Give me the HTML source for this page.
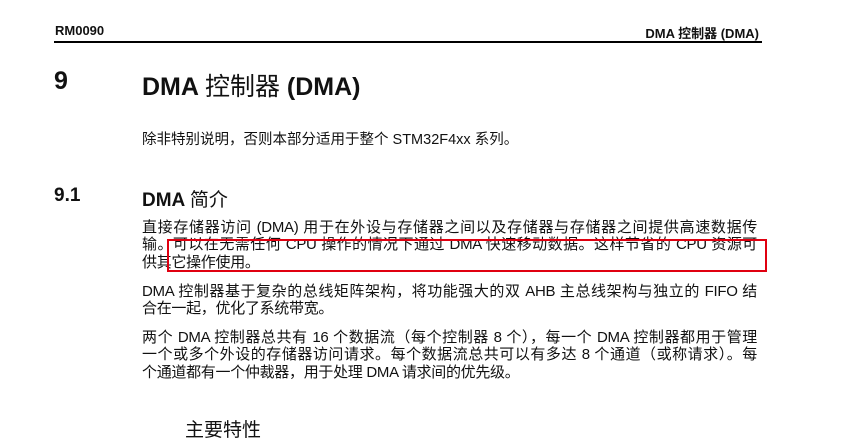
<!DOCTYPE html>
<html><head><meta charset="utf-8"><style>
body{margin:0;width:842px;height:424px;background:#fff;position:relative;overflow:hidden;font-family:"Liberation Sans","Noto Sans CJK SC",sans-serif;color:#111}
.a{position:absolute;white-space:nowrap}
.l{position:absolute;left:142px;width:615px;font-size:15px;line-height:17px;text-align:justify;text-align-last:justify;white-space:nowrap;letter-spacing:-0.3px}
.n{text-align-last:left}
</style></head><body>
<div class="a" style="left:55px;top:23px;font-size:13px;font-weight:bold">RM0090</div>
<div class="a" style="right:83px;top:23px;font-size:13px;font-weight:bold">DMA 控制器 (DMA)</div>
<div class="a" style="left:54px;top:41px;width:708px;height:1.5px;background:#000"></div>
<div class="a" style="left:54px;top:67px;font-size:25px;font-weight:bold">9</div>
<div class="a" style="left:142px;top:67px;font-size:25px;font-weight:bold">DMA <span style="font-weight:normal">控制器</span> (DMA)</div>
<div class="a" style="left:142px;top:128px;font-size:14.5px">除非特别说明，否则本部分适用于整个 STM32F4xx 系列。</div>
<div class="a" style="left:54px;top:185px;font-size:19px;font-weight:bold">9.1</div>
<div class="a" style="left:142px;top:185px;font-size:19px;font-weight:bold">DMA <span style="font-weight:normal">简介</span></div>
<div class="l" style="top:219px">直接存储器访问 (DMA) 用于在外设与存储器之间以及存储器与存储器之间提供高速数据传</div>
<div class="l" style="top:236px">输。可以在无需任何 CPU 操作的情况下通过 DMA 快速移动数据。这样节省的 CPU 资源可</div>
<div class="l n" style="top:254px">供其它操作使用。</div>
<div class="a" style="left:167px;top:239px;width:596px;height:29px;border:2px solid #e00010"></div>
<div class="l" style="top:283px">DMA 控制器基于复杂的总线矩阵架构，将功能强大的双 AHB 主总线架构与独立的 FIFO 结</div>
<div class="l n" style="top:300px">合在一起，优化了系统带宽。</div>
<div class="l" style="top:329px">两个 DMA 控制器总共有 16 个数据流（每个控制器 8 个），每一个 DMA 控制器都用于管理</div>
<div class="l" style="top:346px">一个或多个外设的存储器访问请求。每个数据流总共可以有多达 8 个通道（或称请求）。每</div>
<div class="l n" style="top:364px">个通道都有一个仲裁器，用于处理 DMA 请求间的优先级。</div>
<div class="a" style="left:185px;font-size:19px;line-height:19px;top:421px">主要特性</div>
</body></html>
